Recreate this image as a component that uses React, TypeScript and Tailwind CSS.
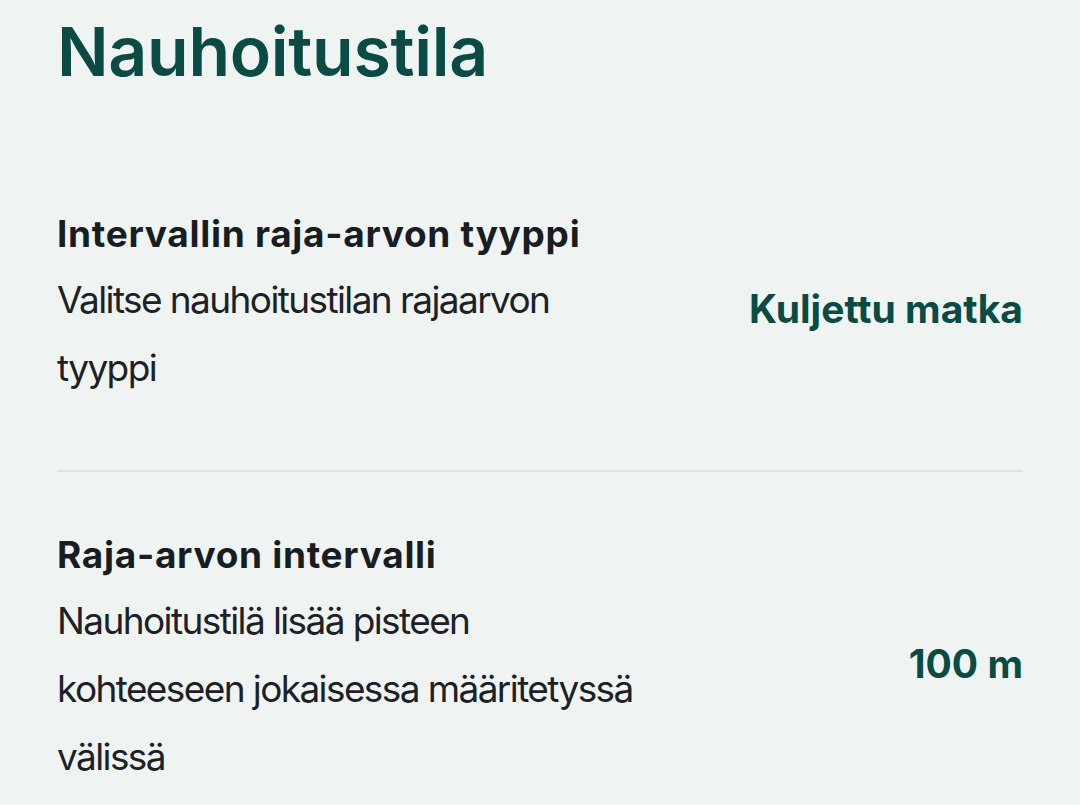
import React from 'react';

interface SettingRowProps {
  title: string;
  description: string;
  value: string;
  className?: string;
}

const SettingRow: React.FC<SettingRowProps> = ({ title, description, value, className }) => {
  return (
    <div className={`flex items-center justify-between gap-8 ${className ?? ''}`}>
      <div className="w-[590px]">
        <h2 className="text-[37px] leading-none font-bold tracking-[0.7px] text-[#181d21] whitespace-nowrap">{title}</h2>
        <p className="mt-[14px] text-[37px] leading-[68px] tracking-[-1.6px] text-[#1c2126]">{description}</p>
      </div>
      <div className="text-[39px] leading-none font-bold text-[#0a4c44] whitespace-nowrap">{value}</div>
    </div>
  );
};

export default function App() {
  return (
    <div
      className="min-h-[805px] w-[1080px] bg-[#eff4f3] px-[57px] pt-[17px] overflow-hidden"
      style={{ fontFamily: 'Inter, "Noto Sans", sans-serif' }}
    >
      <h1 className="text-[68px] leading-none font-semibold tracking-[-0.3px] text-[#0a4c44]">Nauhoitustila</h1>

      <SettingRow
        className="mt-[130px] pb-[68px] border-b-2 border-[#dde3e2]"
        title="Intervallin raja-arvon tyyppi"
        description="Valitse nauhoitustilan rajaarvon tyyppi"
        value="Kuljettu matka"
      />

      <SettingRow
        className="pt-[64px]"
        title="Raja-arvon intervalli"
        description="Nauhoitustilä lisää pisteen kohteeseen jokaisessa määritetyssä välissä"
        value="100 m"
      />
    </div>
  );
}
